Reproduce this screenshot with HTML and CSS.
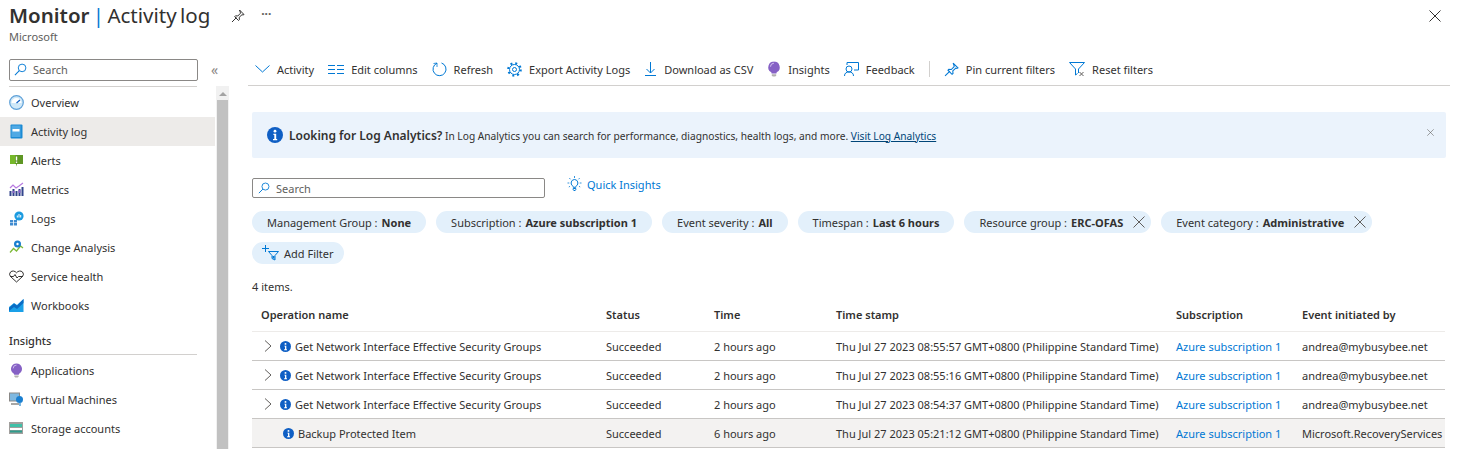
FILE: index.html
```html
<!DOCTYPE html>
<html lang="en">
<head>
    <meta charset="UTF-8">
    <title>Monitor | Activity log</title>
    <link rel="stylesheet" href="styles.css">
</head>
<body>
    <svg class="defs" width="0" height="0">
        <symbol id="info" viewBox="0 0 16 16"><circle cx="8" cy="8" r="8" fill="#0f5fc4"/><circle cx="8" cy="4.2" r="1.4" fill="#fff"/><path d="M6.4 6.8h2.8v5.2h1v1.300H6V12h1.300V8H6.400z" fill="#fff"/></symbol>
        <symbol id="search" viewBox="0 0 14 14"><circle cx="8.7" cy="5.3" r="4.1" fill="none" stroke="#0078d4"/><path d="M5.700 8.300L1 13" fill="none" stroke="#0078d4" stroke-width="1.1"/></symbol>
        <symbol id="bulb" viewBox="0 0 16 18"><path d="M8 .5a6.500 6.500 0 0 0-3.500 12c.5.400.7.900.7 1.500h5.600c0-.6.200-1.100.7-1.500A6.500 6.500 0 0 0 8 .5z" fill="#8661c5"/><path d="M4 6.500A4 4 0 0 1 8 2.500" fill="none" stroke="#c9b6ea" stroke-width="1.200"/><path d="M5.500 15h5v1.200l-1 1.300h-3l-1-1.300z" fill="#b3b1af"/></symbol>
        <symbol id="close" viewBox="0 0 12 12"><path d="M.5.500l11 11M11.500.500l-11 11" fill="none" stroke="currentColor"/></symbol>
        <symbol id="chev" viewBox="0 0 8 12"><path d="M1 .500L7 6l-6 5.500" fill="none" stroke="#605e5c"/></symbol>
    </svg>

    <header class="blade-head">
        <div class="blade-title">
            <h1><b>Monitor</b> <i>|</i> Activity log</h1>
            <svg class="head-pin" width="14" height="14" viewBox="0 0 14 14"><path d="M8.500 1L13 5.500l-1 .5-1-.3-2.800 2.600.2 2.400-.9.800L3.700 7.700l.8-.9 2.300.2 2.700-2.800-.2-1z" fill="none" stroke="#323130"/><path d="M5.500 8.500L1 13" stroke="#323130"/></svg>
            <span class="head-more">&middot;&middot;&middot;</span>
            <svg class="head-close" width="12" height="12"><use href="#close"/></svg>
        </div>
        <div class="blade-sub">Microsoft</div>
    </header>

    <div class="blade-body">
        <aside class="sidebar">
            <div class="side-top">
                <div class="search-box side-search">
                    <svg width="13" height="13"><use href="#search"/></svg>
                    <span>Search</span>
                </div>
                <span class="collapse">&laquo;</span>
            </div>
            <div class="side-scroll">
                <nav class="side-nav">
                    <a class="nav-item">
                        <svg width="15" height="15" viewBox="0 0 15 15"><circle cx="7.500" cy="7.500" r="6.800" fill="#cfe8f8" stroke="#5ea0d8" stroke-width="1.200"/><path d="M2.500 8a5 5 0 0 1 10 0z" fill="#fff"/><path d="M7.500 8l3.500-3" stroke="#0f5fc4" stroke-width="1.200"/></svg>
                        Overview
                    </a>
                    <a class="nav-item active">
                        <svg width="15" height="15" viewBox="0 0 15 15"><rect x="1.500" y="0.500" width="12" height="14" rx="1" fill="#1a8ad4"/><rect x="2.500" y="1.500" width="9" height="11.500" fill="#50a9e4"/><rect x="3.500" y="5" width="7" height="2.500" fill="#fff"/></svg>
                        Activity log
                    </a>
                    <a class="nav-item">
                        <svg width="15" height="15" viewBox="0 0 15 15"><rect x="1" y="2" width="13" height="9" fill="#5e9624"/><path d="M1 2h6l-1 1v8H1z" fill="#76b82a"/><path d="M7 11l.500 2.500L8 11z" fill="#5e9624"/><rect x="6.800" y="3.500" width="1.400" height="4" fill="#fff"/><rect x="6.800" y="8.500" width="1.400" height="1.400" fill="#fff"/></svg>
                        Alerts
                    </a>
                    <a class="nav-item">
                        <svg width="15" height="15" viewBox="0 0 15 15"><path d="M1 6l3-3 3 3 3-2 4-3" fill="none" stroke="#b77ae0" stroke-width="1.200"/><path d="M1.500 9v5M4.500 7v7M7.500 9v5M10.500 7v7M13.500 5v9" stroke="#32448c" stroke-width="2"/><path d="M4.500 9v2M10.500 8v3" stroke="#8661c5" stroke-width="2"/></svg>
                        Metrics
                    </a>
                    <a class="nav-item">
                        <svg width="15" height="15" viewBox="0 0 15 15"><circle cx="10" cy="5" r="4.600" fill="#1a9be0"/><path d="M8.300 6.500V4.500M10 6.500V3M11.700 6.500V4" stroke="#fff"/><path d="M1 9h3v2.500H1zM4.800 9H8v2.500H4.800zM1 12h3v2.500H1zM4.800 12H8v2.500H4.800z" fill="#3f8bd0"/></svg>
                        Logs
                    </a>
                    <a class="nav-item">
                        <svg width="15" height="15" viewBox="0 0 15 15"><path d="M1 12.500l3.500-4 3 2.500 4-5 2.500 2" fill="none" stroke="#7fba3a" stroke-width="1.300"/><circle cx="8.500" cy="4" r="3.500" fill="#1a7fd0"/><circle cx="8.500" cy="4" r="1.200" fill="#fff"/></svg>
                        Change Analysis
                    </a>
                    <a class="nav-item">
                        <svg width="15" height="13" viewBox="0 0 15 13"><path d="M7.500 12L1.500 6.500a3.400 3.400 0 0 1 0-4.500c1.700-1.600 4.500-1.200 6 .8 1.500-2 4.300-2.400 6-.8a3.400 3.400 0 0 1 0 4.500z" fill="none" stroke="#323130"/><path d="M1 6.500h3.500l1.500-2 2 3.500 1.500-1.500H14" fill="none" stroke="#323130"/></svg>
                        Service health
                    </a>
                    <a class="nav-item">
                        <svg width="15" height="13" viewBox="0 0 15 13"><rect width="14.500" height="13" fill="#1aa0e8"/><path d="M0 0h14.500L8 6 5 4 0 8z" fill="#fff"/><path d="M0 9l5-4.500 3 2 6.500-6.500v4L8 10 5 8l-5 4z" fill="#0a6cc4"/></svg>
                        Workbooks
                    </a>
                </nav>
                <div class="side-group">Insights</div>
                <nav class="side-nav">
                    <a class="nav-item">
                        <svg width="15" height="15"><use href="#bulb"/></svg>
                        Applications
                    </a>
                    <a class="nav-item">
                        <svg width="15" height="15" viewBox="0 0 15 15"><rect x="0.500" y="1" width="10" height="8" fill="#7fb8e0" stroke="#8a8886"/><path d="M2 12h8" stroke="#8a8886" stroke-width="1.500"/><circle cx="10.500" cy="7.500" r="3.500" fill="#1a7fd0"/><path d="M10 11h2v3h-2z" fill="#7fb8e0"/></svg>
                        Virtual Machines
                    </a>
                    <a class="nav-item">
                        <svg width="15" height="13" viewBox="0 0 15 13"><rect width="14" height="12" fill="#a19f9d"/><rect x="1" y="2" width="12" height="3" fill="#40c0a8"/><rect x="1" y="6" width="12" height="2" fill="#fff"/><rect x="1" y="8.500" width="12" height="2" fill="#2f9c8c"/></svg>
                        Storage accounts
                    </a>
                </nav>
                <div class="scrollbar"><span class="scroll-up"></span><span class="scroll-thumb"></span></div>
            </div>
        </aside>

        <main class="content">
            <div class="toolbar">
                <a class="tool">
                    <svg width="15" height="8" viewBox="0 0 15 8"><path d="M.500.500L7.500 7l7-6.500" fill="none" stroke="#0078d4"/></svg>
                    Activity
                </a>
                <a class="tool">
                    <svg width="16" height="9" viewBox="0 0 16 9"><path d="M0 .500h7M9 .500h7M0 4.500h7M9 4.500h7M0 8.500h7M9 8.500h7" stroke="#0078d4"/></svg>
                    Edit columns
                </a>
                <a class="tool">
                    <svg width="15" height="15" viewBox="0 0 15 15"><path d="M5 1.200a6.500 6.500 0 1 0 4.500-.2" fill="none" stroke="#0078d4"/><path d="M5 1v4M1.500 1.500L5 1" fill="none" stroke="#0078d4" stroke-width=".8"/></svg>
                    Refresh
                </a>
                <a class="tool">
                    <svg width="15" height="15" viewBox="0 0 15 15"><circle cx="7.500" cy="7.500" r="2" fill="none" stroke="#0078d4"/><circle cx="7.500" cy="7.500" r="5" fill="none" stroke="#0078d4"/><circle cx="7.500" cy="7.500" r="6.300" fill="none" stroke="#0078d4" stroke-width="2" stroke-dasharray="2 2.950"/></svg>
                    Export Activity Logs
                </a>
                <a class="tool">
                    <svg width="13" height="14" viewBox="0 0 13 14"><path d="M6.500 0v11M2.500 7l4 4 4-4M1 13.500h11" fill="none" stroke="#0078d4"/></svg>
                    Download as CSV
                </a>
                <a class="tool">
                    <svg width="14" height="16" viewBox="0 0 16 18"><use href="#bulb"/></svg>
                    Insights
                </a>
                <a class="tool">
                    <svg width="15" height="15" viewBox="0 0 15 15"><path d="M3 3V.500h11.500V8H10" fill="none" stroke="#0078d4"/><circle cx="5" cy="7" r="3" fill="none" stroke="#0078d4"/><path d="M.500 14c0-3 2-4 4.500-4s4.500 1 4.500 4" fill="none" stroke="#0078d4"/></svg>
                    Feedback
                </a>
                <span class="tool-sep"></span>
                <a class="tool">
                    <svg width="15" height="15" viewBox="0 0 14 14"><path d="M8.500 1L13 5.500l-1 .5-1-.3-2.800 2.600.2 2.400-.9.800L3.700 7.700l.8-.9 2.300.2 2.700-2.800-.2-1z" fill="none" stroke="#0078d4"/><path d="M5.500 8.500L1 13" stroke="#0078d4"/></svg>
                    Pin current filters
                </a>
                <a class="tool">
                    <svg width="16" height="15" viewBox="0 0 16 15"><path d="M.500.500h15L9.500 7v4M.500.500l6 6.500v6l2-1.500" fill="none" stroke="#0078d4"/><path d="M10.500 10l4 4M14.500 10l-4 4" stroke="#605e5c"/></svg>
                    Reset filters
                </a>
            </div>

            <div class="banner">
                <svg class="banner-info" width="16" height="16"><use href="#info"/></svg>
                <p><strong>Looking for Log Analytics?</strong> In Log Analytics you can search for performance, diagnostics, health logs, and more. <a>Visit Log Analytics</a></p>
                <svg class="banner-close" width="7" height="7" viewBox="0 0 12 12"><use href="#close"/></svg>
            </div>

            <div class="search-row">
                <div class="search-box grid-search">
                    <svg width="12" height="12"><use href="#search"/></svg>
                    <span>Search</span>
                </div>
                <a class="quick">
                    <svg width="15" height="16" viewBox="0 0 15 16"><path d="M7.500 3.500a3.500 3.500 0 0 0-2 6.300c.5.400.7.900.7 1.500h2.600c0-.6.200-1.100.7-1.500a3.500 3.500 0 0 0-2-6.300zM6.200 12.500h2.600v1.200l-.6.800H6.800l-.6-.8z" fill="none" stroke="#0078d4"/><path d="M7.500 0v2M2.300 2l1.200 1.300M12.700 2l-1.200 1.300M.500 7h1.800M12.700 7h1.800M1.800 11l1.200-.7M13.200 11l-1.200-.7" stroke="#0078d4" stroke-width=".8"/></svg>
                    Quick Insights
                </a>
            </div>

            <div class="pills">
                <span class="pill">Management Group : <b>None</b></span>
                <span class="pill">Subscription : <b>Azure subscription 1</b></span>
                <span class="pill">Event severity : <b>All</b></span>
                <span class="pill">Timespan : <b>Last 6 hours</b></span>
                <span class="pill pill-x">Resource group : <b>ERC-OFAS</b><svg width="12" height="12"><use href="#close"/></svg></span>
                <span class="pill pill-x">Event category : <b>Administrative</b><svg width="12" height="12"><use href="#close"/></svg></span>
                <span class="pill pill-add">
                    <svg width="17" height="16" viewBox="0 0 17 16"><path d="M3.500 0v7M0 3.500h7" stroke="#0078d4"/><path d="M6.500 6.500h10L13 10.500V15l-3-1.500v-3z" fill="none" stroke="#0078d4"/><path d="M10.500 11h2v3l-2-1z" fill="#0078d4"/></svg>
                    Add Filter
                </span>
            </div>

            <div class="count">4 items.</div>

            <div class="grid">
                <div class="row row-head">
                    <div>Operation name</div><div>Status</div><div>Time</div><div>Time stamp</div><div>Subscription</div><div>Event initiated by</div>
                </div>
                <div class="row">
                    <div class="op"><svg class="op-chev" width="8" height="12"><use href="#chev"/></svg><svg class="op-info" width="11" height="11"><use href="#info"/></svg>Get Network Interface Effective Security Groups</div>
                    <div>Succeeded</div><div>2 hours ago</div><div>Thu Jul 27 2023 08:55:57 GMT+0800 (Philippine Standard Time)</div><div><a>Azure subscription 1</a></div><div>andrea@mybusybee.net</div>
                </div>
                <div class="row">
                    <div class="op"><svg class="op-chev" width="8" height="12"><use href="#chev"/></svg><svg class="op-info" width="11" height="11"><use href="#info"/></svg>Get Network Interface Effective Security Groups</div>
                    <div>Succeeded</div><div>2 hours ago</div><div>Thu Jul 27 2023 08:55:16 GMT+0800 (Philippine Standard Time)</div><div><a>Azure subscription 1</a></div><div>andrea@mybusybee.net</div>
                </div>
                <div class="row">
                    <div class="op"><svg class="op-chev" width="8" height="12"><use href="#chev"/></svg><svg class="op-info" width="11" height="11"><use href="#info"/></svg>Get Network Interface Effective Security Groups</div>
                    <div>Succeeded</div><div>2 hours ago</div><div>Thu Jul 27 2023 08:54:37 GMT+0800 (Philippine Standard Time)</div><div><a>Azure subscription 1</a></div><div>andrea@mybusybee.net</div>
                </div>
                <div class="row row-selected">
                    <div class="op op-leaf"><svg class="op-info" width="11" height="11"><use href="#info"/></svg>Backup Protected Item</div>
                    <div>Succeeded</div><div>6 hours ago</div><div>Thu Jul 27 2023 05:21:12 GMT+0800 (Philippine Standard Time)</div><div><a>Azure subscription 1</a></div><div>Microsoft.RecoveryServices</div>
                </div>
            </div>
        </main>
    </div>
</body>
</html>
```

FILE: styles.css
```css
html, body {
    margin: 0;
    height: 449px;
    overflow: hidden;
    background-color: white;
}
body {
    color: #323130;
    font-family: "Noto Sans", "Open Sans", sans-serif;
    font-size: 11px;
}
a {
    cursor: pointer;
}
svg {
    flex: none;
}
.defs {
    position: absolute;
}

/* header */
.blade-head {
    height: 53px;
    padding: 0 9px;
}
.blade-title {
    display: flex;
    align-items: center;
    height: 31px;
}
h1 {
    margin: 0;
    font-size: 20.5px;
    font-weight: 400;
    line-height: 31px;
    word-spacing: -2px;
    white-space: nowrap;
}
h1 b {
    font-weight: 600;
}
h1 i {
    font-style: normal;
    color: #0078d4;
}
.head-pin {
    margin-left: 21px;
}
.head-more {
    margin-left: 16px;
    margin-top: -4px;
    font-size: 12px;
    font-weight: 700;
    color: #605e5c;
}
.head-close {
    margin-left: auto;
    margin-right: 9px;
    color: #323130;
}
.blade-sub {
    line-height: 12px;
    color: #605e5c;
}

.blade-body {
    display: flex;
}

/* left menu */
.sidebar {
    width: 229px;
    flex: none;
}
.side-top {
    display: flex;
    align-items: center;
    height: 33px;
    padding-left: 9px;
    box-sizing: border-box;
}
.search-box {
    display: flex;
    align-items: center;
    gap: 6px;
    box-sizing: border-box;
    border: 1px solid #8a8886;
    border-radius: 2px;
    color: #605e5c;
}
.side-search {
    width: 189px;
    height: 22px;
    padding-left: 4px;
}
.collapse {
    margin-left: 13px;
    font-size: 14px;
    color: #8a8886;
}
.side-scroll {
    position: relative;
    height: 363px;
}
.side-scroll::before {
    content: "";
    display: block;
    height: 1px;
    width: 188px;
    margin: 0 0 1px 9px;
    background-color: #d2d0ce;
}
.side-nav {
    width: 215px;
}
.nav-item {
    display: flex;
    align-items: center;
    gap: 7px;
    height: 29px;
    padding-left: 9px;
    white-space: nowrap;
}
.nav-item svg {
    width: 15px;
}
.nav-item.active {
    background-color: #edebe9;
}
.side-group {
    width: 188px;
    margin: 13px 0 1px 9px;
    padding-bottom: 5px;
    border-bottom: 1px solid #d2d0ce;
    line-height: 16px;
    font-weight: 500;
}
.scrollbar {
    position: absolute;
    top: 0;
    left: 216px;
    bottom: 0;
    width: 13px;
    background-color: #f1f1f1;
}
.scroll-up {
    display: block;
    width: 0;
    margin: 6px auto 4px;
    border: 4px solid transparent;
    border-top: 0;
    border-bottom: 4px solid #a3a3a3;
}
.scroll-thumb {
    display: block;
    width: 11px;
    height: 350px;
    margin: 0 auto;
    background-color: #c1c1c1;
}

/* main */
.content {
    flex: 1;
    min-width: 0;
    padding: 0 9px 0 19px;
}
.toolbar {
    display: flex;
    align-items: center;
    height: 32px;
    border-bottom: 1px solid #d2d0ce;
    padding-left: 7px;
    white-space: nowrap;
}
.tool {
    display: flex;
    align-items: center;
    gap: 7px;
    margin-right: 14px;
}
.tool-sep {
    width: 1px;
    height: 16px;
    margin-right: 14px;
    background-color: #d2d0ce;
}
.banner {
    display: flex;
    align-items: center;
    width: 1194px;
    height: 46px;
    margin: 26px 0 0 4px;
    padding: 0 12px 0 15px;
    box-sizing: border-box;
    border-radius: 2px;
    background-color: #ebf3fc;
}
.banner p {
    flex: 1;
    margin: 0 0 0 6px;
    font-size: 10.2px;
    white-space: nowrap;
}
.banner strong {
    font-size: 12px;
    font-weight: 600;
}
.banner a {
    color: #004578;
    text-decoration: underline;
}
.banner-close {
    margin-bottom: 6px;
    color: #605e5c;
}
.search-row {
    display: flex;
    margin: 20px 0 0 4px;
}
.grid-search {
    width: 293px;
    height: 20px;
    padding-left: 5px;
}
.quick {
    display: flex;
    align-items: center;
    gap: 5px;
    height: 12px;
    margin-left: 22px;
    color: #0078d4;
    white-space: nowrap;
}
.pills {
    display: flex;
    flex-wrap: wrap;
    gap: 9px 10px;
    margin: 13px 0 0 4px;
}
.pill {
    display: flex;
    align-items: center;
    height: 22px;
    padding: 0 15px;
    gap: 4px;
    border-radius: 11px;
    background-color: #e3f0fb;
    white-space: nowrap;
}
.pill b {
    font-weight: 700;
}
.pill-x {
    padding-right: 6px;
}
.pill-x svg {
    margin-left: 6px;
    color: #605e5c;
}
.pill-add {
    padding: 0 10px;
    gap: 5px;
}
.count {
    margin: 15px 0 0 4px;
    line-height: 16px;
}

/* results */
.grid {
    width: 1193px;
    margin: 5px 0 0 4px;
}
.row {
    display: grid;
    grid-template-columns: 345px 108px 122px 340px 126px 152px;
    align-items: center;
    height: 29px;
    box-sizing: border-box;
    border-bottom: 1px solid #c8c6c4;
    white-space: nowrap;
}
.row > div {
    padding-left: 9px;
    overflow: hidden;
}
.row a {
    color: #0078d4;
}
.row-head {
    height: 32px;
    padding-bottom: 3px;
    border-bottom-color: #edebe9;
    font-weight: 600;
}
.row-selected {
    background-color: #f3f2f1;
}
.op {
    display: flex;
    align-items: center;
}
.op-chev {
    margin-left: 3px;
}
.op-info {
    margin-left: 8px;
    margin-right: 4px;
}
.row > .op-leaf {
    padding-left: 31px;
}
.op-leaf .op-info {
    margin-left: 0;
}
```
